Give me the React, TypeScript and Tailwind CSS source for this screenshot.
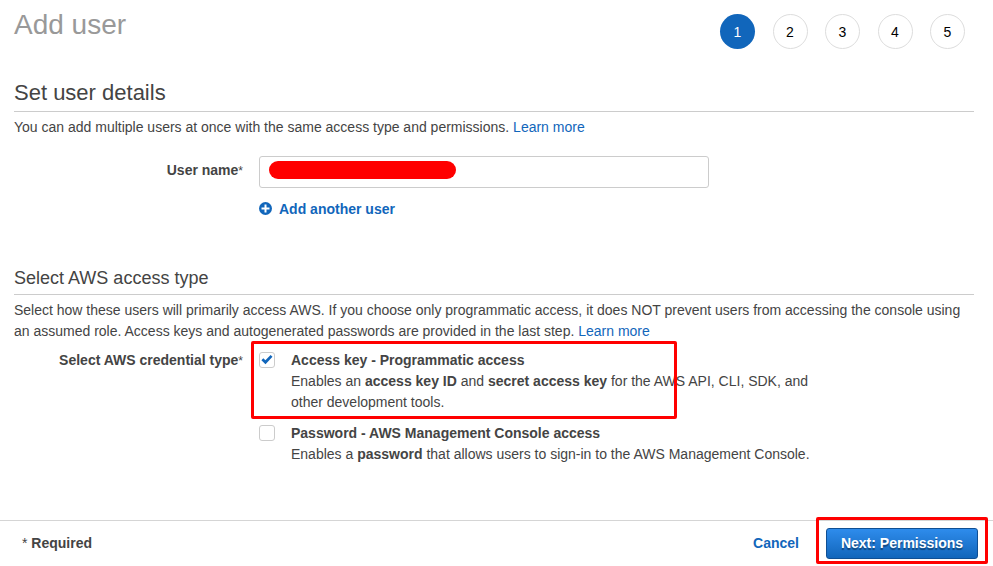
import React from 'react';

const steps = [1, 2, 3, 4, 5];

function LearnMore() {
  return (
    <a href="#" className="text-[#1166bb]">
      Learn more
    </a>
  );
}

interface AccessOptionProps {
  id: string;
  title: string;
  checked?: boolean;
  highlighted?: boolean;
  children: React.ReactNode;
}

function AccessOption({ id, title, checked, highlighted, children }: AccessOptionProps) {
  return (
    <div className="relative flex gap-4">
      <span className="relative mt-[2px] block h-4 w-4 shrink-0">
        <input
          id={id}
          type="checkbox"
          defaultChecked={checked}
          className="peer block h-4 w-4 appearance-none rounded-[3px] border border-[#cccccc] bg-white"
        />
        <svg
          viewBox="0 0 16 16"
          className="pointer-events-none absolute inset-0 hidden h-4 w-4 fill-[#1166bb] peer-checked:block"
        >
          <path d="M2.4 8.3 4.3 6.3 6.4 8.3 11.6 3 13.5 4.8 6.5 12.3Z" />
        </svg>
      </span>
      <div className="max-w-[540px]">
        <label htmlFor={id} className="block font-bold">
          {title}
        </label>
        <p>{children}</p>
      </div>
      {highlighted && (
        <div className="pointer-events-none absolute -top-[9px] -bottom-[6px] -left-2 w-[426px] rounded-[2px] border-3 border-[#ff0000]" />
      )}
    </div>
  );
}

export default function App() {
  return (
    <div className="bg-white font-['Liberation_Sans',Arial,sans-serif] text-[14px] leading-[21px] text-[#444444]">
      <main className="pr-[19px] pl-[14px]">
        <header className="flex items-start justify-between pt-[8px]">
          <h1 className="text-[28px] leading-[34px] text-[#999999]">Add user</h1>
          <ol className="mt-[6px] mr-[9px] flex w-[245px] justify-between">
            {steps.map((step) => (
              <li
                key={step}
                className={
                  step === 1
                    ? 'flex h-[35px] w-[35px] items-center justify-center rounded-full bg-[#1166bb] pt-[2px] text-white'
                    : 'flex h-[35px] w-[35px] items-center justify-center rounded-full border border-[#dddddd] pt-[2px] text-black'
                }
              >
                {step}
              </li>
            ))}
          </ol>
        </header>

        <section className="pt-[29px]">
          <h2 className="border-b border-[#cccccc] pb-[3px] text-[22px] leading-[30px]">Set user details</h2>
          <p className="mt-[5px]">
            You can add multiple users at once with the same access type and permissions. <LearnMore />
          </p>
          <div className="mt-[18px] flex gap-4">
            <label htmlFor="user-name" className="w-[229px] shrink-0 pt-[4px] text-right">
              <b>User name</b>
              <span className="text-[12px]">*</span>
            </label>
            <div className="flex-1">
              <div className="relative max-w-[450px]">
                <input
                  id="user-name"
                  type="text"
                  className="block h-8 w-full rounded-[3px] border border-[#cccccc] px-[9px]"
                />
                <div className="pointer-events-none absolute top-[5px] left-[10px] h-[18px] w-[187px] rounded-[9px] bg-[#ff0000]" />
              </div>
              <button type="button" className="mt-[11px] flex items-start gap-[7px] font-bold text-[#1166bb]">
                <svg viewBox="0 0 13 13" className="mt-[3px] h-[13px] w-[13px]">
                  <circle cx="6.5" cy="6.5" r="6.5" fill="#1166bb" />
                  <path d="M6.5 2.5v8M2.5 6.5h8" stroke="white" strokeWidth="2" />
                </svg>
                Add another user
              </button>
            </div>
          </div>
        </section>

        <section className="pt-[46px]">
          <h3 className="border-b border-[#cccccc] pb-[3px] text-[18px] leading-[25px]">Select AWS access type</h3>
          <p className="mt-[5px]">
            Select how these users will primarily access AWS. If you choose only programmatic access, it does NOT
            prevent users from accessing the console using an assumed role. Access keys and autogenerated passwords are
            provided in the last step. <LearnMore />
          </p>
          <fieldset className="mt-[8px] flex gap-4" aria-labelledby="credential-type">
            <div id="credential-type" className="w-[229px] shrink-0 text-right">
              <b>Select AWS credential type</b>
              <span className="text-[12px]">*</span>
            </div>
            <div className="flex flex-1 flex-col gap-[10px]">
              <AccessOption id="access-key" title="Access key - Programmatic access" checked highlighted>
                Enables an <b>access key ID</b> and <b>secret access key</b> for the AWS API, CLI, SDK, and other
                development tools.
              </AccessOption>
              <AccessOption id="password" title="Password - AWS Management Console access">
                Enables a <b>password</b> that allows users to sign-in to the AWS Management Console.
              </AccessOption>
            </div>
          </fieldset>
        </section>
      </main>

      <footer className="mt-[55px] flex items-center justify-between border-t border-[#d5d5d5] pt-[7px] pr-[15px] pb-[6px] pl-[22px]">
        <p>
          * <b>Required</b>
        </p>
        <div className="flex items-center gap-[27px]">
          <a href="#" className="font-bold text-[#1166bb]">
            Cancel
          </a>
          <div className="relative">
            <button
              type="button"
              className="block h-[31px] w-[152px] rounded-[3px] border border-[#0f4f94] bg-linear-to-b from-[#2e8cec] to-[#1166bb] font-bold text-white [text-shadow:0_2px_1px_rgba(0,0,0,0.4)]"
            >
              Next: Permissions
            </button>
            <div className="pointer-events-none absolute -top-[11px] -right-[10px] -bottom-[5px] -left-[10px] rounded-[2px] border-3 border-[#ff0000]" />
          </div>
        </div>
      </footer>
    </div>
  );
}
